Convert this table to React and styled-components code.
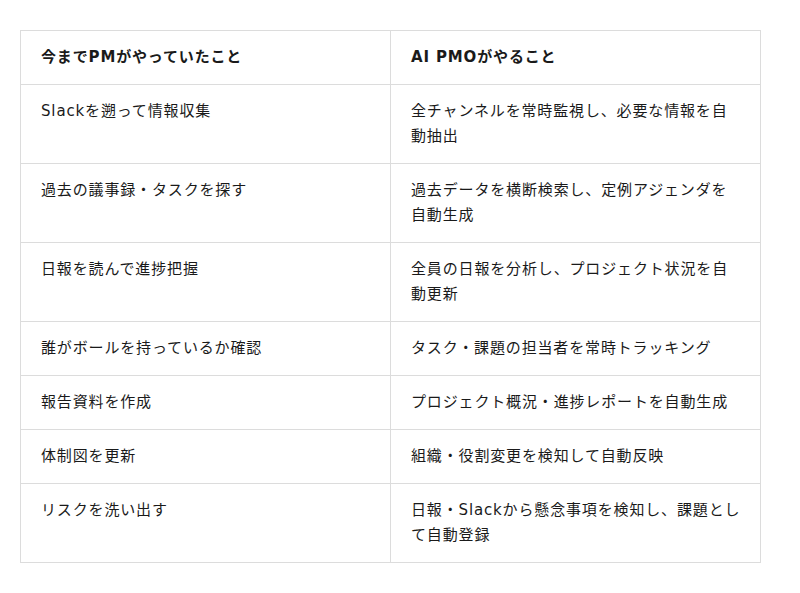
import React from 'react';
import styled, { createGlobalStyle } from 'styled-components';

const GlobalStyle = createGlobalStyle`
  body {
    margin: 0;
    background: #ffffff;
    font-family: "DejaVu Sans", "Noto Sans CJK JP", sans-serif;
    color: #1a1a1a;
  }
`;

const Page = styled.div`
  padding: 30px 39px 30px 20px;
`;

const Table = styled.table`
  width: 741px;
  border-collapse: collapse;
  table-layout: fixed;
  font-size: 15px;
  line-height: 25px;
  letter-spacing: 0.85px;
`;

const HeadCell = styled.th`
  text-align: left;
  font-weight: bold;
  padding: 14px 18px 14px 20px;
  border: 1px solid #dcdcdc;
`;

const Cell = styled.td`
  padding: 14px 18px 14px 20px;
  border: 1px solid #dcdcdc;
  vertical-align: top;
  height: ${p => (p.$tall ? 50 : 25)}px;
`;

const rows = [
  ['Slackを遡って情報収集', '全チャンネルを常時監視し、必要な情報を自動抽出', true],
  ['過去の議事録・タスクを探す', '過去データを横断検索し、定例アジェンダを自動生成', true],
  ['日報を読んで進捗把握', '全員の日報を分析し、プロジェクト状況を自動更新', true],
  ['誰がボールを持っているか確認', 'タスク・課題の担当者を常時トラッキング', false],
  ['報告資料を作成', 'プロジェクト概況・進捗レポートを自動生成', false],
  ['体制図を更新', '組織・役割変更を検知して自動反映', false],
  ['リスクを洗い出す', '日報・Slackから懸念事項を検知し、課題として自動登録', true],
];

export default function App() {
  return (
    <>
      <GlobalStyle />
      <Page>
        <Table>
          <thead>
            <tr>
              <HeadCell>今までPMがやっていたこと</HeadCell>
              <HeadCell>AI PMOがやること</HeadCell>
            </tr>
          </thead>
          <tbody>
            {rows.map(([before, after, tall]) => (
              <tr key={before}>
                <Cell $tall={tall}>{before}</Cell>
                <Cell $tall={tall}>{after}</Cell>
              </tr>
            ))}
          </tbody>
        </Table>
      </Page>
    </>
  );
}
